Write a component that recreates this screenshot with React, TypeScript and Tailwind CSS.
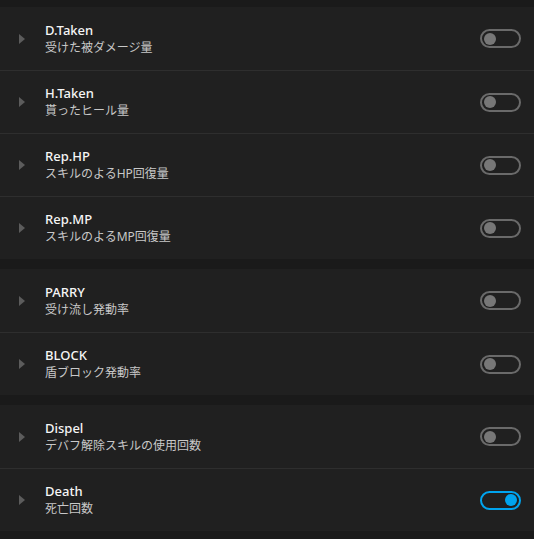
import React, { useState } from 'react';

type Item = { key: string; label: string; desc: string; on?: boolean };

const groups: Item[][] = [
  [
    { key: 'dtaken', label: 'D.Taken', desc: '受けた被ダメージ量' },
    { key: 'htaken', label: 'H.Taken', desc: '貰ったヒール量' },
    { key: 'rephp', label: 'Rep.HP', desc: 'スキルのよるHP回復量' },
    { key: 'repmp', label: 'Rep.MP', desc: 'スキルのよるMP回復量' },
  ],
  [
    { key: 'parry', label: 'PARRY', desc: '受け流し発動率' },
    { key: 'block', label: 'BLOCK', desc: '盾ブロック発動率' },
  ],
  [
    { key: 'dispel', label: 'Dispel', desc: 'デバフ解除スキルの使用回数' },
    { key: 'death', label: 'Death', desc: '死亡回数', on: true },
  ],
];

const Toggle = ({ on, onClick }: { on: boolean; onClick: () => void }) => (
  <button
    type="button"
    onClick={onClick}
    className={`flex h-[19px] w-[41px] items-center rounded-full border-2 px-[2px] ${
      on ? 'justify-end border-[#00a4ef]' : 'justify-start border-[#6a6a6a]'
    }`}
  >
    <span
      className={`block h-[12px] w-[12px] rounded-full ${on ? 'bg-[#00a4ef]' : 'bg-[#777777]'}`}
    />
  </button>
);

const Row = ({ item, first }: { item: Item; first: boolean }) => {
  const [on, setOn] = useState(!!item.on);

  return (
    <div
      className={`flex h-[63px] items-center bg-[#202020] pr-[13px] ${
        first ? '' : 'border-t border-[#2e2e2e]'
      }`}
    >
      <div className="flex w-[45px] justify-start pl-[19px]">
        <svg width="6" height="10" viewBox="0 0 6 10">
          <path d="M0 0 L6 5 L0 10 Z" fill="#5c5c5c" />
        </svg>
      </div>
      <div className="flex flex-1 flex-col leading-[17px]">
        <span className="text-[13px] font-medium text-[#f5f5f5]">{item.label}</span>
        <span className="text-[12px] text-[#c8c8c8]">{item.desc}</span>
      </div>
      <Toggle on={on} onClick={() => setOn(!on)} />
    </div>
  );
};

export default function App() {
  return (
    <div
      className="flex h-[539px] w-[534px] flex-col gap-[10px] bg-[#1a1a1a] pt-[7px]"
      style={{ fontFamily: '"Noto Sans", "Noto Sans CJK JP", sans-serif' }}
    >
      {groups.map((g, gi) => (
        <div key={gi} className="flex flex-col">
          {g.map((item, i) => (
            <Row key={item.key} item={item} first={i === 0} />
          ))}
        </div>
      ))}
    </div>
  );
}
